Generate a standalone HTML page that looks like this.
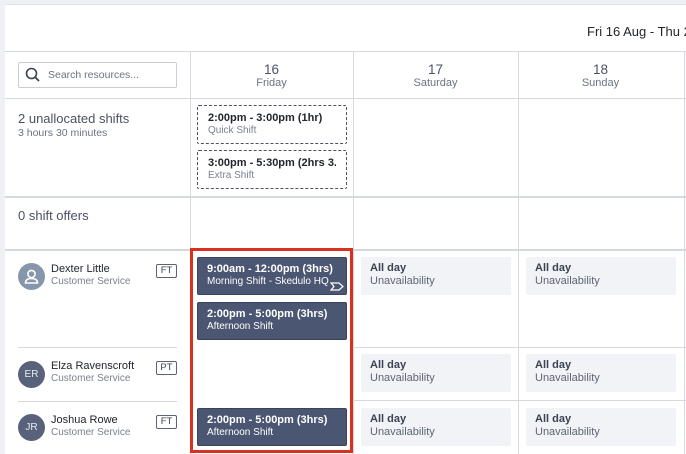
<!DOCTYPE html>
<html><head><meta charset="utf-8"><style>
*{box-sizing:border-box;margin:0;padding:0}
html,body{width:686px;height:454px;overflow:hidden}
body{background:#eef0f4;font-family:"Liberation Sans",sans-serif;position:relative}
.a{position:absolute}
.panel{left:5px;top:5px;width:681px;height:449px;background:#fff;overflow:hidden}
.hl{position:absolute;height:1px;background:#d5d8de}
.vl{position:absolute;width:1px;background:#d5d8de}
.day{position:absolute;text-align:center;color:#4a5163;width:163px}
.day b{display:block;font-weight:normal;font-size:13.5px;line-height:14px}
.day span{display:block;font-size:11px;line-height:13px;color:#6b7282}
.un{position:absolute;left:197px;width:150px;height:39px;border:1px dashed #4c5260;border-radius:2px;padding:5px 10px;font-size:11px}
.un b{display:block;color:#22252d;white-space:nowrap;overflow:hidden;line-height:14px}
.un span{display:block;color:#7b8190;font-size:10px;line-height:12px}
.sh{position:absolute;left:197px;width:150px;height:38px;background:#4b5672;border:1px solid #3a4358;border-radius:2px;padding:4px 9px;color:#fff;white-space:nowrap}
.sh b{display:block;font-size:11px;line-height:14px}
.sh span{display:block;font-size:10px;line-height:12px}
.ua{position:absolute;width:150px;height:38px;background:#f1f3f6;border-radius:2px;padding:5px 9px}
.ua b{display:block;font-size:11px;line-height:13px;color:#3c4252}
.ua span{display:block;font-size:11px;line-height:13px;color:#5d6475}
.av{position:absolute;left:18px;width:27px;height:27px;border-radius:50%;background:#58627a;color:#e8ebf0;font-size:10px;text-align:center;line-height:27px}
.nm{position:absolute;left:51px;font-size:11px;color:#22252d;line-height:13px}
.nm span{display:block;font-size:10px;color:#7b8190;line-height:12px}
.bd{position:absolute;left:156px;width:21px;height:14px;border:1px solid #5c6273;border-radius:2px;font-size:9.5px;color:#3c4252;text-align:center;line-height:12px}
</style></head><body>
<div class="a panel"><div class="a" style="left:582px;top:19px;font-size:13px;color:#22252d;white-space:nowrap">Fri 16 Aug - Thu 22 Aug</div></div>
<div class="a" style="left:5px;top:4px;width:681px;height:1px;background:#e1e4e9"></div>

<div class="hl" style="left:5px;top:51px;width:681px"></div>
<div class="hl" style="left:5px;top:98px;width:681px"></div>
<div class="hl" style="left:5px;top:196px;width:681px;height:2px"></div>
<div class="hl" style="left:5px;top:249px;width:681px;height:2px"></div>
<div class="hl" style="left:353px;top:347px;width:333px"></div>
<div class="hl" style="left:353px;top:400px;width:333px"></div>
<div class="hl" style="left:18px;top:347px;width:159px"></div>
<div class="hl" style="left:18px;top:401px;width:159px"></div>
<div class="vl" style="left:190px;top:51px;height:403px"></div>
<div class="vl" style="left:353px;top:51px;height:403px"></div>
<div class="vl" style="left:518px;top:51px;height:403px"></div>
<div class="vl" style="left:684px;top:51px;height:403px"></div>

<div class="a" style="left:18px;top:62px;width:159px;height:26px;border:1px solid #c9cdd4;border-radius:2px"></div>
<svg class="a" style="left:25px;top:67px" width="16" height="16" viewBox="0 0 16 16"><circle cx="6.5" cy="6.5" r="5" fill="none" stroke="#3c4252" stroke-width="1.6"/><line x1="10" y1="10" x2="14" y2="14" stroke="#3c4252" stroke-width="1.8"/></svg>
<div class="a" style="left:48px;top:69px;font-size:10.5px;color:#6b7282">Search resources...</div>

<div class="day" style="left:190px;top:63px"><b>16</b><span>Friday</span></div>
<div class="day" style="left:354px;top:63px"><b>17</b><span>Saturday</span></div>
<div class="day" style="left:519px;top:63px"><b>18</b><span>Sunday</span></div>

<div class="a" style="left:18px;top:111px;font-size:13px;color:#4a5163">2 unallocated shifts</div>
<div class="a" style="left:18px;top:127px;font-size:10.5px;color:#6b7282">3 hours 30 minutes</div>
<div class="a" style="left:18px;top:208px;font-size:13px;color:#4a5163">0 shift offers</div>

<div class="un" style="top:105px"><b>2:00pm - 3:00pm (1hr)</b><span>Quick Shift</span></div>
<div class="un" style="top:150px"><b>3:00pm - 5:30pm (2hrs 3...</b><span>Extra Shift</span></div>

<div class="av" style="top:263px;background:#8797ab"><svg width="27" height="27" viewBox="0 0 27 27"><circle cx="13.5" cy="11" r="3.6" fill="none" stroke="#fff" stroke-width="1.6"/><path d="M7.5 20 q0-4.5 6-4.5 q6 0 6 4.5 z" fill="none" stroke="#fff" stroke-width="1.6"/></svg></div>
<div class="nm" style="top:263px">Dexter Little<span>Customer Service</span></div>
<div class="bd" style="top:264px">FT</div>
<div class="av" style="top:361px">ER</div>
<div class="nm" style="top:360px">Elza Ravenscroft<span>Customer Service</span></div>
<div class="bd" style="top:361px">PT</div>
<div class="av" style="top:414px">JR</div>
<div class="nm" style="top:414px">Joshua Rowe<span>Customer Service</span></div>
<div class="bd" style="top:415px">FT</div>

<div class="sh" style="top:257px"><b>9:00am - 12:00pm (3hrs)</b><span>Morning Shift - Skedulo HQ</span>
<svg class="a" style="left:132px;top:24px" width="14" height="9" viewBox="0 0 14 9"><path d="M1 1h8l4 3.5-4 3.5H1l3-3.5z" fill="none" stroke="#fff" stroke-width="1.2"/></svg></div>
<div class="sh" style="top:302px"><b>2:00pm - 5:00pm (3hrs)</b><span>Afternoon Shift</span></div>
<div class="sh" style="top:408px"><b>2:00pm - 5:00pm (3hrs)</b><span>Afternoon Shift</span></div>

<div class="ua" style="left:361px;top:257px"><b>All day</b><span>Unavailability</span></div>
<div class="ua" style="left:526px;top:257px"><b>All day</b><span>Unavailability</span></div>
<div class="ua" style="left:361px;top:354px"><b>All day</b><span>Unavailability</span></div>
<div class="ua" style="left:526px;top:354px"><b>All day</b><span>Unavailability</span></div>
<div class="ua" style="left:361px;top:408px"><b>All day</b><span>Unavailability</span></div>
<div class="ua" style="left:526px;top:408px"><b>All day</b><span>Unavailability</span></div>

<div class="a" style="left:190px;top:248px;width:163px;height:205px;border:3px solid #d9301f"></div>
</body></html>
